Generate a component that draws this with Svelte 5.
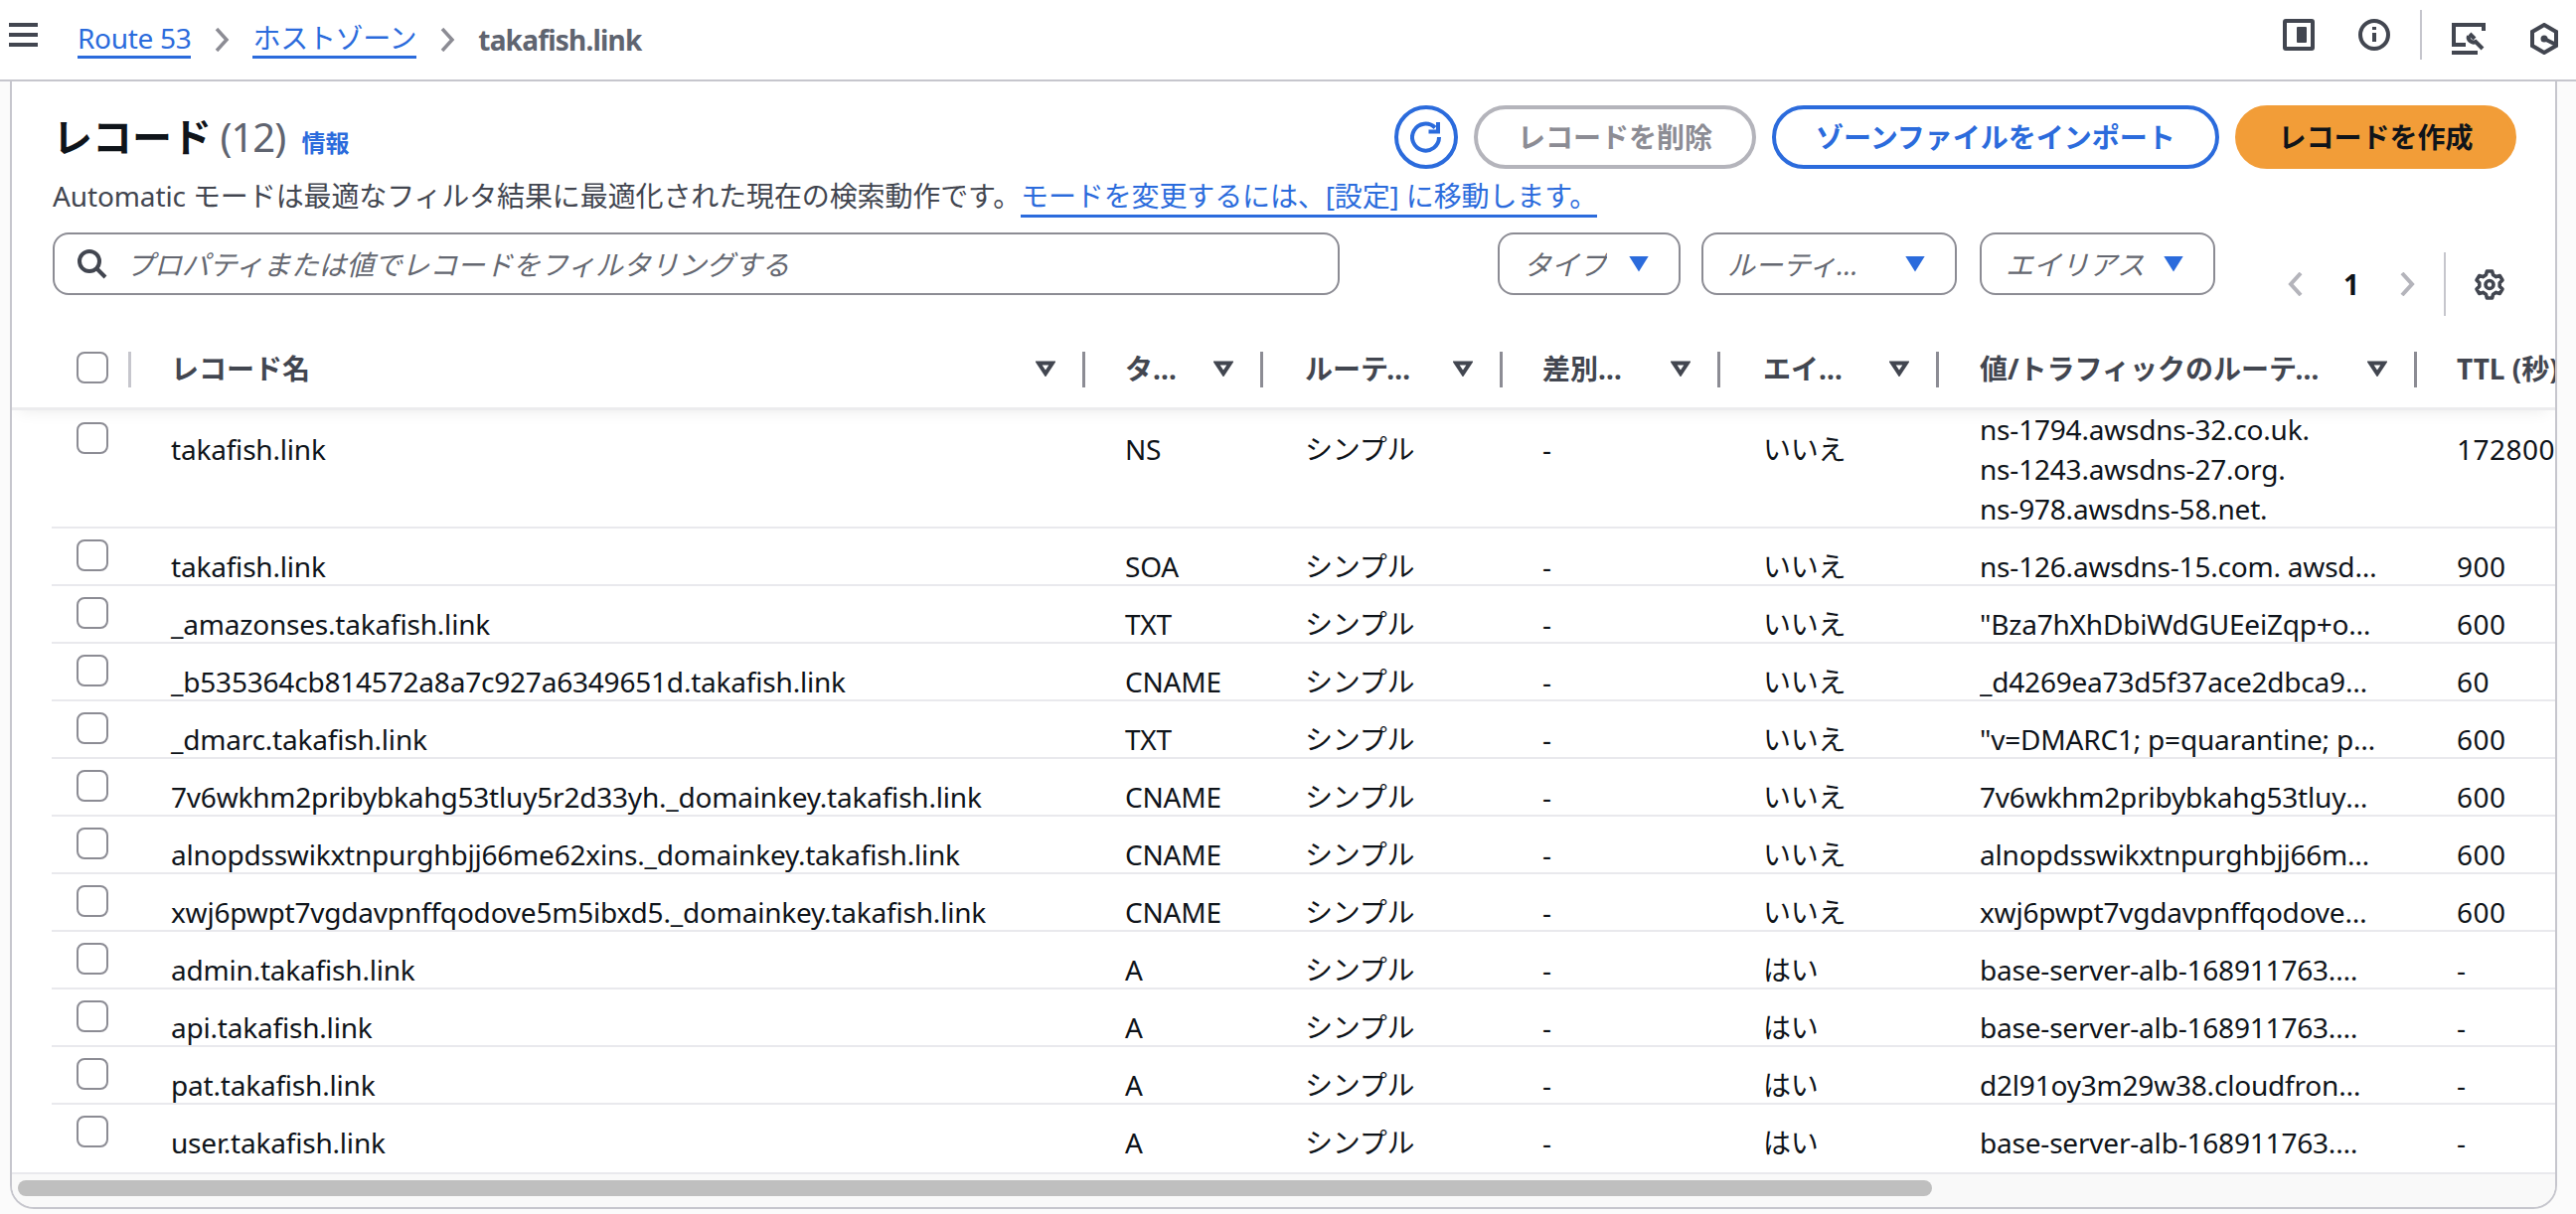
<script lang="ts">
  type Rec = { name: string; type: string; alias: string; values: string[]; ttl: string };

  const ns = ['ns-1794.awsdns-32.co.uk.', 'ns-1243.awsdns-27.org.', 'ns-978.awsdns-58.net.'];
  // shown cut off like this in the console
  const alb = 'base-server-alb-168911763.…';

  const records: Rec[] = [
    { name: 'takafish.link', type: 'NS', alias: 'いいえ', values: ns, ttl: '172800' },
    { name: 'takafish.link', type: 'SOA', alias: 'いいえ', values: ['ns-126.awsdns-15.com. awsdns-hostmaster.amazon.com. 1 7200 900 1209600 86400'], ttl: '900' },
    { name: '_amazonses.takafish.link', type: 'TXT', alias: 'いいえ', values: ['"Bza7hXhDbiWdGUEeiZqp+oQk2mVtYw8sLr3nJfA="'], ttl: '600' },
    { name: '_b535364cb814572a8a7c927a6349651d.takafish.link', type: 'CNAME', alias: 'いいえ', values: ['_d4269ea73d5f37ace2dbca9e1f07b6c2.acm-validations.aws.'], ttl: '60' },
    { name: '_dmarc.takafish.link', type: 'TXT', alias: 'いいえ', values: ['"v=DMARC1; p=quarantine; pct=25; rua=mailto:dmarc@takafish.link"'], ttl: '600' },
    { name: '7v6wkhm2pribybkahg53tluy5r2d33yh._domainkey.takafish.link', type: 'CNAME', alias: 'いいえ', values: ['7v6wkhm2pribybkahg53tluy5r2d33yh.dkim.amazonses.com'], ttl: '600' },
    { name: 'alnopdsswikxtnpurghbjj66me62xins._domainkey.takafish.link', type: 'CNAME', alias: 'いいえ', values: ['alnopdsswikxtnpurghbjj66me62xins.dkim.amazonses.com'], ttl: '600' },
    { name: 'xwj6pwpt7vgdavpnffqodove5m5ibxd5._domainkey.takafish.link', type: 'CNAME', alias: 'いいえ', values: ['xwj6pwpt7vgdavpnffqodove5m5ibxd5.dkim.amazonses.com'], ttl: '600' },
    { name: 'admin.takafish.link', type: 'A', alias: 'はい', values: [alb], ttl: '-' },
    { name: 'api.takafish.link', type: 'A', alias: 'はい', values: [alb], ttl: '-' },
    { name: 'pat.takafish.link', type: 'A', alias: 'はい', values: ['d2l91oy3m29w38.cloudfron…'], ttl: '-' },
    { name: 'user.takafish.link', type: 'A', alias: 'はい', values: [alb], ttl: '-' },
  ];

  const columns = ['レコード名', 'タイプ', 'ルーティングポリシー', '差別化要因', 'エイリアス', '値/トラフィックのルーティング先'];
</script>

<div class="page">
  <header class="topbar">
    <button class="menu" type="button" aria-label="メニュー"><span></span><span></span><span></span></button>
    <nav class="crumbs">
      <a href="#r53">Route 53</a>
      <svg class="sep" viewBox="0 0 16 24"><path d="M3 1l10 11L3 23" /></svg>
      <a href="#zones">ホストゾーン</a>
      <svg class="sep" viewBox="0 0 16 24"><path d="M3 1l10 11L3 23" /></svg>
      <span class="current">takafish.link</span>
    </nav>
    <div class="tools">
      <svg class="tool panel-ico" viewBox="0 0 32 32"><rect x="2" y="2" width="28" height="28" rx="1" /><rect class="solid" x="14" y="8" width="10" height="16" rx="1" /></svg>
      <svg class="tool info-ico" viewBox="0 0 32 32"><circle cx="16" cy="16" r="14" /><path d="M16 14v9" /><path d="M16 8v3" /></svg>
      <i class="tool-div"></i>
      <svg class="tool mon-ico" viewBox="0 0 34 32"><path d="M14 22H2V2h30v6" /><path d="M0 30h26" /><path d="M17 13a5 5 0 0 0 7 6l7 7" /><path d="M18 11l5 5" /></svg>
      <svg class="tool hex-ico" viewBox="0 0 30 32"><path d="M15 2l12 7v14l-12 7-12-7V9z" /><circle class="solid" cx="15" cy="16" r="3.5" /><path d="M15 16l12 6" /></svg>
    </div>
  </header>

  <main class="panel">
    <div class="head">
      <div class="title-row">
        <h1>レコード <span class="count">(12)</span> <a class="info" href="#info">情報</a></h1>
        <div class="actions">
          <button class="btn icon" type="button" aria-label="更新">
            <svg viewBox="0 0 32 32"><path d="M29 16A13.500 13.500 0 1 1 25 6.500" /><path d="M28 1v9.500h-9.500" /></svg>
          </button>
          <button class="btn off" type="button">レコードを削除</button>
          <button class="btn normal" type="button">ゾーンファイルをインポート</button>
          <button class="btn primary" type="button">レコードを作成</button>
        </div>
      </div>
      <p class="desc">Automatic モードは最適なフィルタ結果に最適化された現在の検索動作です。<a href="#settings">モードを変更するには、[設定] に移動します。</a></p>
      <div class="filters">
        <div class="search">
          <svg viewBox="0 0 30 30"><circle cx="12" cy="12" r="10" /><path d="M19 19l9 9" /></svg>
          <span>プロパティまたは値でレコードをフィルタリングする</span>
        </div>
        <div class="select s-type"><span>タイプ</span><i class="tri"></i></div>
        <div class="select s-route"><span>ルーティングポリシー</span><i class="tri"></i></div>
        <div class="select s-alias"><span>エイリアス</span><i class="tri"></i></div>
        <div class="pager">
          <svg class="pg" viewBox="0 0 16 24"><path d="M13 1L3 12l10 11" /></svg>
          <b>1</b>
          <svg class="pg" viewBox="0 0 16 24"><path d="M3 1l10 11L3 23" /></svg>
          <i class="pg-div"></i>
          <svg class="gear" viewBox="0 0 16 16.500"><path d="M6.700 1.500h2.600l.5 1.900 1.500.9 1.900-.5 1.300 2.200-1.400 1.400v1.700l1.400 1.400-1.300 2.200-1.900-.5-1.500.9-.5 1.900H6.700l-.5-1.900-1.500-.9-1.900.5-1.300-2.200 1.400-1.400V7.400L1.500 6l1.300-2.200 1.900.5 1.500-.9z" /><circle cx="8" cy="8.250" r="2" /></svg>
        </div>
      </div>
    </div>

    <div class="table">
      <div class="hdr">
        <div class="grid">
          <div class="hcell check"><i class="box"></i></div>
          {#each columns as col}
            <div class="hcell">
              <span class="label">{col}</span>
              <svg class="sort" viewBox="0 0 20 16"><path d="M3 2.500h14L10 13z" /></svg>
            </div>
          {/each}
          <div class="hcell last">TTL (秒)</div>
        </div>
      </div>

      {#each records as rec, i}
        <div class="row grid" class:first={i === 0} class:end={i === records.length - 1}>
          <div class="check"><i class="box"></i></div>
          <div class="cell name">{rec.name}</div>
          <div class="cell">{rec.type}</div>
          <div class="cell">シンプル</div>
          <div class="cell">-</div>
          <div class="cell">{rec.alias}</div>
          <div class="cell vals">
            {#each rec.values as v}<div class="val">{v}</div>{/each}
          </div>
          <div class="cell ttl">{rec.ttl}</div>
        </div>
      {/each}
    </div>

    <div class="track"><div class="thumb"></div></div>
  </main>
</div>

<style>
  :global(body) {
    background: #fbfbfb;
    overflow: hidden;
  }
  .page {
    width: 2592px;
    height: 1222px;
    font: 28px/40px "Noto Sans", "Noto Sans CJK JP", sans-serif;
    color: #0f141a;
  }

  .topbar {
    height: 80px;
    border-bottom: 2px solid #c6c6cd;
    background: #fff;
    display: flex;
    align-items: center;
    box-sizing: content-box;
  }
  .menu {
    width: 29px;
    height: 24px;
    margin: -10px 0 0 9px;
    padding: 0;
    border: 0;
    background: none;
    display: flex;
    flex-direction: column;
    justify-content: space-between;
  }
  .menu span {
    height: 4px;
    background: #424650;
  }
  .crumbs {
    display: flex;
    align-items: center;
    margin-left: 40px;
    height: 60px;
  }
  .crumbs a {
    color: #2b6bdc;
    text-decoration: none;
    border-bottom: 3px solid #2b6bdc;
    line-height: 36px;
    margin-top: -1px;
    letter-spacing: -0.3px;
  }
  .crumbs .sep {
    width: 16px;
    height: 24px;
    margin: 0 23px;
    fill: none;
    stroke: #8c8c94;
    stroke-width: 3.500;
  }
  .current {
    font-weight: 700;
    color: #5f6470;
    letter-spacing: -0.8px;
  }
  .tools {
    margin-left: auto;
    display: flex;
    align-items: center;
    height: 50px;
    margin-top: -10px;
    padding-right: 17px;
  }
  .tool {
    fill: none;
    stroke: #424650;
    stroke-width: 4;
  }
  .tool .solid {
    fill: #424650;
    stroke: none;
  }
  .panel-ico {
    width: 32px;
    height: 32px;
  }
  .info-ico {
    width: 32px;
    height: 32px;
    margin-left: 44px;
  }
  .tool-div {
    width: 2px;
    height: 50px;
    background: #c6c6cd;
    margin: 0 30px;
  }
  .mon-ico {
    width: 34px;
    height: 32px;
    margin-top: 8px;
  }
  .hex-ico {
    width: 30px;
    height: 32px;
    margin: 8px 0 0 44px;
  }

  .panel {
    margin: 0 19px 0 10px;
    border: 2px solid #c6c6cd;
    border-top: 0;
    border-radius: 0 0 24px 24px;
    background: #fff;
    overflow: hidden;
  }
  .head {
    padding: 24px 39px 12px 41px;
  }
  .title-row {
    display: flex;
    justify-content: space-between;
    height: 64px;
  }
  h1 {
    margin: 0;
    font-size: 40px;
    line-height: 64px;
    font-weight: 700;
    white-space: nowrap;
  }
  .count {
    font-weight: 400;
    color: #5f6470;
    letter-spacing: -1px;
    margin-left: -2px;
  }
  .info {
    font-size: 24px;
    font-weight: 700;
    color: #2b6bdc;
    text-decoration: none;
    margin-left: 6px;
  }
  .actions {
    display: flex;
    gap: 16px;
  }
  .btn {
    height: 64px;
    box-sizing: border-box;
    border-radius: 32px;
    border: 4px solid #2b6bdc;
    background: #fff;
    font: 700 28px/36px "Noto Sans", "Noto Sans CJK JP", sans-serif;
    padding: 0;
    color: #2b6bdc;
  }
  .btn.icon {
    width: 64px;
    display: flex;
    align-items: center;
    justify-content: center;
  }
  .btn.icon svg {
    width: 32px;
    height: 32px;
    fill: none;
    stroke: #2b6bdc;
    stroke-width: 4;
  }
  .btn.off {
    width: 284px;
    border-color: #b4b4bb;
    color: #8c8c94;
  }
  .btn.normal {
    width: 450px;
  }
  .btn.primary {
    width: 283px;
    background: #f29d38;
    border-color: #f29d38;
    color: #0f141a;
  }
  .desc {
    margin: 7px 0 0;
    color: #424650;
    white-space: nowrap;
    letter-spacing: -0.12px;
  }
  .desc a {
    color: #2b6bdc;
    text-decoration: none;
    border-bottom: 3px solid #2b6bdc;
  }
  .filters {
    margin-top: 17px;
    display: flex;
    align-items: flex-start;
  }
  .search,
  .select {
    height: 63px;
    box-sizing: border-box;
    border: 2px solid #8c8c94;
    border-radius: 16px;
    display: flex;
    align-items: center;
    font-style: italic;
    color: #656871;
    white-space: nowrap;
  }
  .search {
    width: 1295px;
    padding-left: 23px;
    margin-right: 159px;
    letter-spacing: -0.1px;
  }
  .search svg {
    width: 30px;
    height: 30px;
    margin-right: 19px;
    fill: none;
    stroke: #424650;
    stroke-width: 4;
  }
  .select {
    padding: 0 30px 0 24px;
    justify-content: space-between;
  }
  .select span {
    overflow: hidden;
    text-overflow: ellipsis;
  }
  .s-type {
    width: 184px;
    margin-right: 21px;
  }
  .s-route {
    width: 257px;
    margin-right: 23px;
  }
  .s-route span {
    width: 147px;
  }
  .s-alias {
    width: 237px;
  }
  .tri {
    flex: none;
    width: 20px;
    height: 16px;
    background: #2b6bdc;
    clip-path: polygon(0 0, 100% 0, 50% 100%);
  }
  .pager {
    margin: 20px 0 0 65px;
    height: 64px;
    display: flex;
    align-items: center;
  }
  .pg {
    width: 16px;
    height: 24px;
    margin: 0 8px;
    fill: none;
    stroke: #b4b4bb;
    stroke-width: 4;
  }
  .pager b {
    width: 80px;
    text-align: center;
  }
  .pg-div {
    width: 2px;
    height: 64px;
    background: #c6c6cd;
    margin: 0 28px 0 21px;
  }
  .gear {
    width: 32px;
    height: 33px;
    fill: none;
    stroke: #424650;
    stroke-width: 1.800;
    stroke-linejoin: round;
  }

  .table {
    overflow: hidden;
  }
  .grid {
    display: grid;
    grid-template-columns: 80px 960px 179px 241px 219px 220px 481px 200px;
  }
  .hdr {
    position: relative;
    z-index: 1;
    height: 80px;
    padding-left: 40px;
    background: #fff;
    border-bottom: 0;
    box-shadow: 0 3px 0 #ececee, 0 10px 16px -8px rgba(0, 0, 0, 0.1);
  }
  .hcell {
    position: relative;
    height: 80px;
    box-sizing: border-box;
    padding: 2px 30px 0 40px;
    display: flex;
    align-items: center;
    font-weight: 700;
    color: #424650;
    white-space: nowrap;
    min-width: 0;
  }
  .hcell.check {
    padding: 0 0 0 25px;
  }
  .hcell.last {
    padding-right: 0;
  }
  .hcell:nth-child(4),
  .cell:nth-child(4) {
    padding-left: 42px;
  }
  .hcell:nth-child(6),
  .cell:nth-child(6) {
    padding-left: 43px;
  }
  .hcell:nth-child(7),
  .cell:nth-child(7) {
    padding-left: 41px;
  }
  .hcell:not(.last)::after {
    content: "";
    position: absolute;
    right: 0;
    top: 24px;
    width: 3px;
    height: 36px;
    background: #8c8c94;
  }
  .hcell.check::after {
    background: #c6c6cd;
  }
  .label {
    flex: 1;
    min-width: 0;
    overflow: hidden;
    text-overflow: ellipsis;
    margin-right: 30px;
  }
  .sort {
    flex: none;
    width: 20px;
    height: 16px;
    fill: none;
    stroke: #424650;
    stroke-width: 4;
  }
  .box {
    display: block;
    width: 32px;
    height: 32px;
    box-sizing: border-box;
    border: 2px solid #8c8c94;
    border-radius: 8px;
    background: #fff;
  }

  .row {
    margin-left: 40px;
    height: 58px;
    box-sizing: border-box;
    border-bottom: 2px solid #e9e9ed;
    letter-spacing: -0.2px;
  }
  .row.first {
    height: 122px;
  }
  .row.end {
    height: 68px;
    border-bottom: 0;
  }
  .row .check {
    padding: 11px 0 0 25px;
  }
  .row.first .check {
    padding-top: 15px;
  }
  .cell {
    padding: 18px 40px 0;
    min-width: 0;
    white-space: nowrap;
    overflow: hidden;
    text-overflow: ellipsis;
  }
  .row.first .cell {
    padding-top: 22px;
  }
  .row.first .cell.vals {
    padding-top: 2px;
  }
  .cell.vals {
    padding-right: 38px;
  }
  .cell.ttl {
    padding-right: 0;
    letter-spacing: 0.5px;
  }
  .val {
    overflow: hidden;
    text-overflow: ellipsis;
  }

  .track {
    height: 27px;
    border-top: 2px solid #e9e9ed;
    background: #f9f9f9;
    padding: 6px 0 0 6px;
    box-sizing: content-box;
  }
  .thumb {
    width: 1926px;
    height: 16px;
    border-radius: 8px;
    background: #bfbfbf;
  }
</style>
